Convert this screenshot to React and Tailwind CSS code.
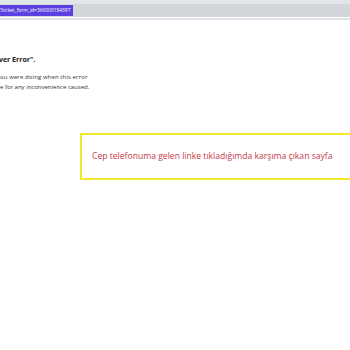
export default function App() {
  return (
    <div className="w-[350px] h-[350px] bg-white overflow-hidden relative" style={{ fontFamily: '"Open Sans", "Liberation Sans", sans-serif' }}>
      <div className="h-[4px] bg-[#e1e6ea]" />
      <div className="h-[13px] bg-[#d3d7da] flex items-center">
        <div className="h-[11px] w-[73px] bg-[#5b3fe0] text-white text-[4.9px] leading-[11px] whitespace-nowrap flex items-center">
          <span>?ticket_form_id=360000184397</span>
        </div>
      </div>
      <div className="h-[1px] bg-white" />
      <div className="h-[2px] bg-[#dde3e8]" />
      <div className="pt-[35px] pl-0">
        <div className="text-[7px] font-bold text-[#222] leading-[10px] -ml-[1px]">ver Error".</div>
        <div className="mt-[7px] text-[6px] text-[#333] leading-[10px] whitespace-nowrap">
          <div className="tracking-[0.1px]">ou were doing when this error</div>
          <div>e for any inconvenience caused.</div>
        </div>
      </div>
      <div className="mt-[41px] ml-[80px] w-[290px] h-[47px] border-2 border-[#f3e92b] flex items-center pl-[10px]">
        <span className="text-[8.6px] text-[#c8384a] whitespace-nowrap">Cep telefonuma gelen linke tıkladığımda karşıma çıkan sayfa</span>
      </div>
    </div>
  );
}
